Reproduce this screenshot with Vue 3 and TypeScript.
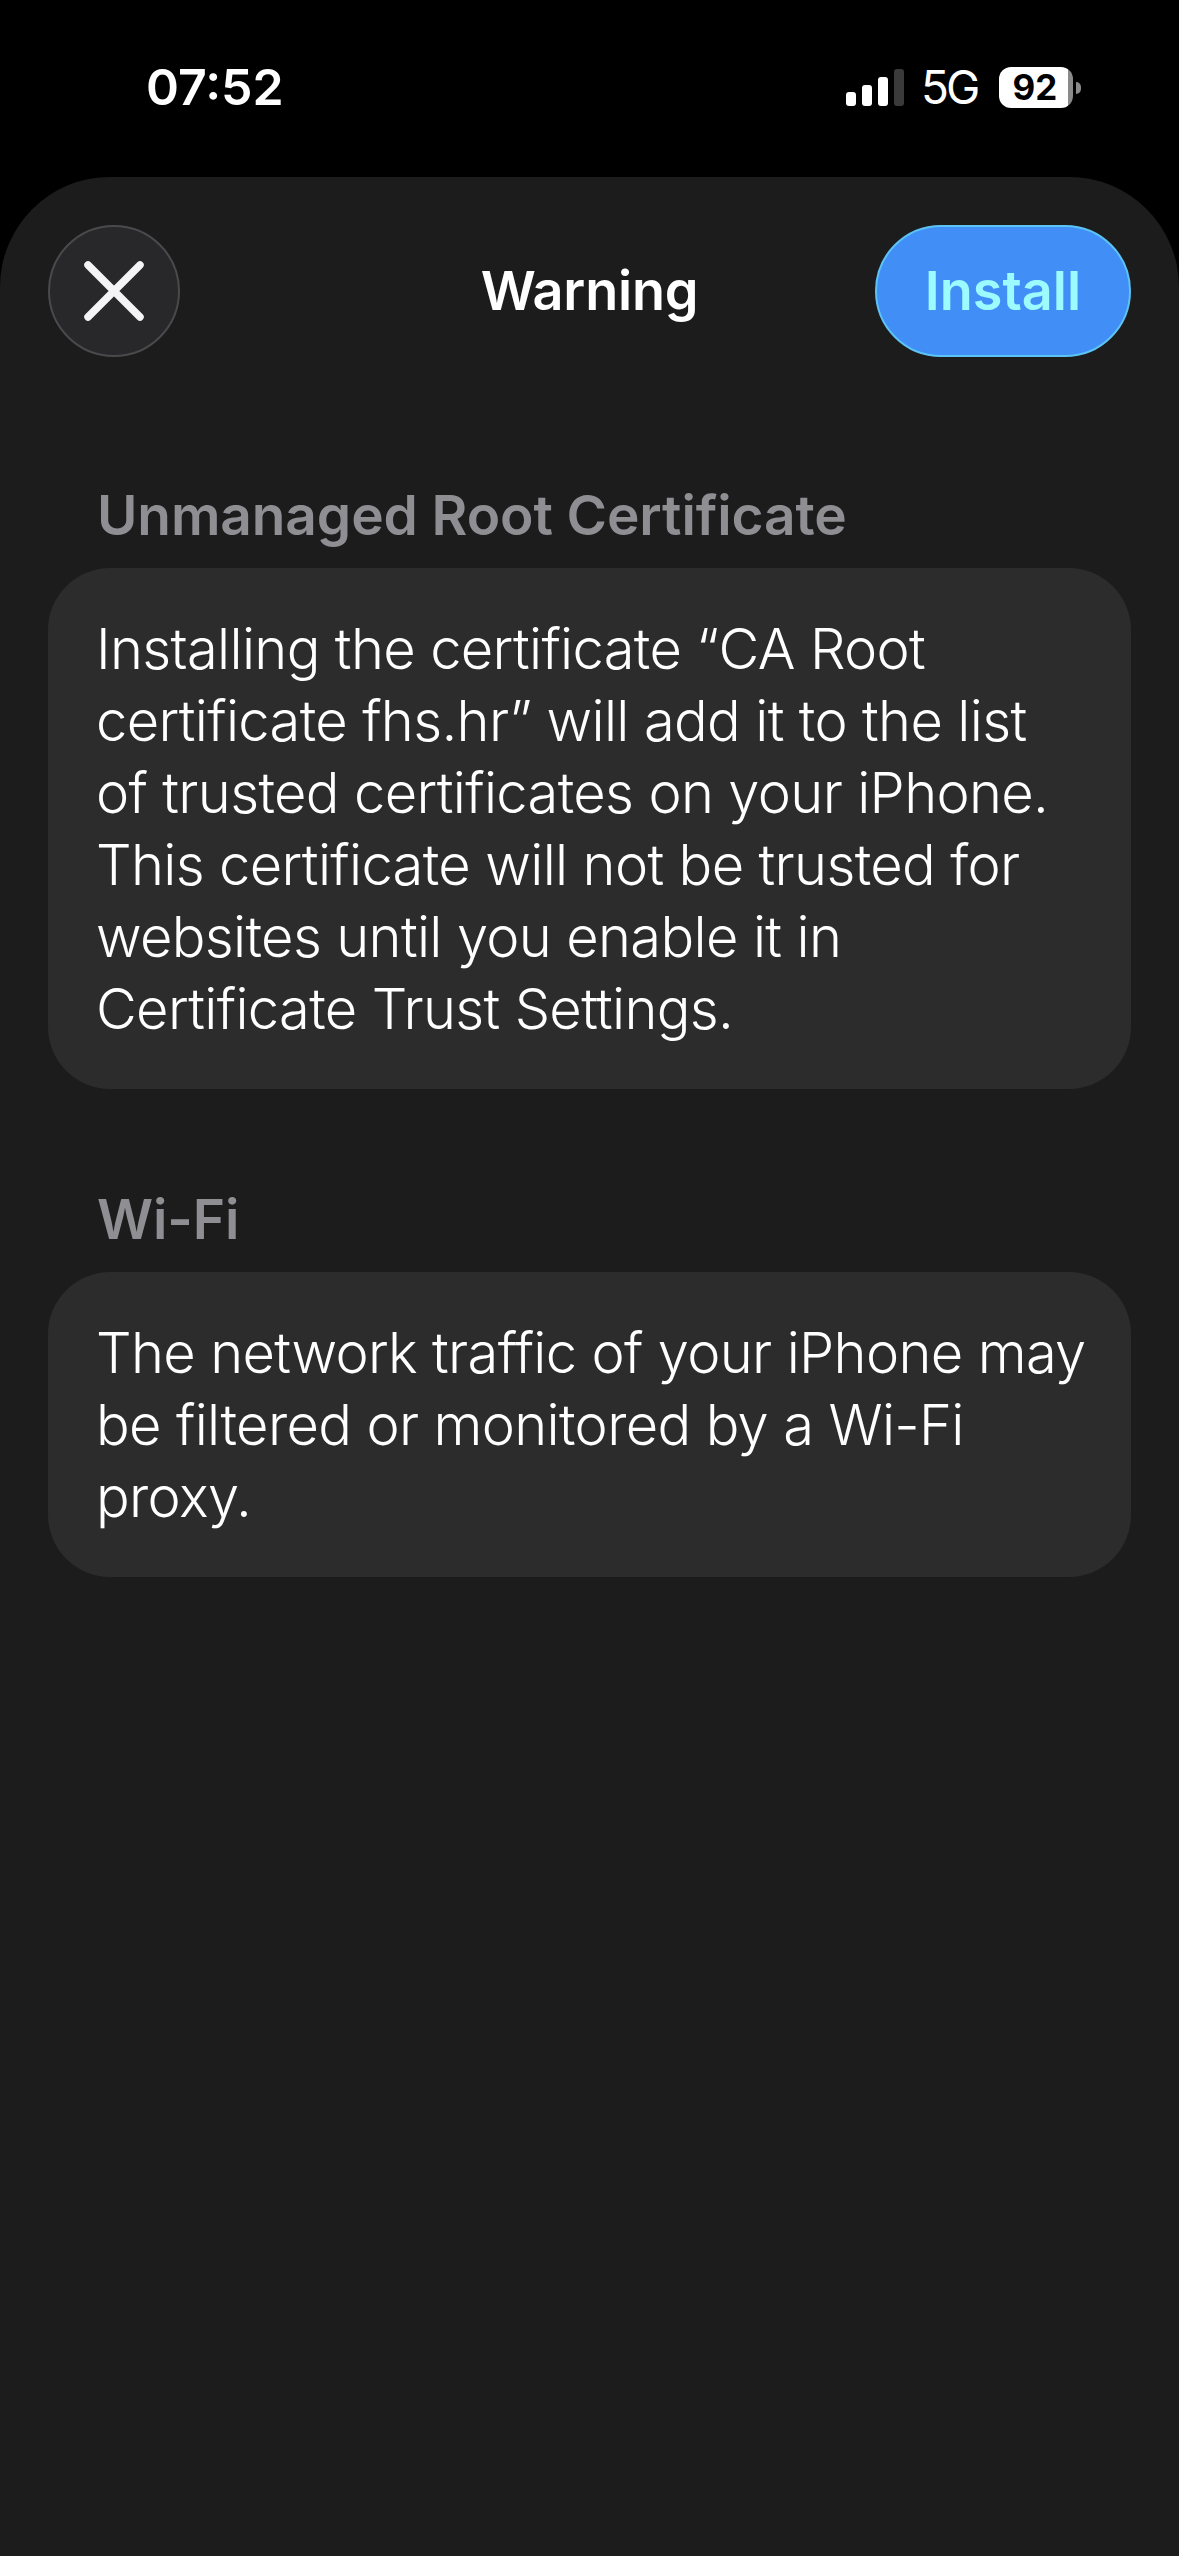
<script setup lang="ts">
interface Section { title: string; body: string[] }
const sections: Section[] = [
  {
    title: 'Unmanaged Root Certificate',
    body: [
      'Installing the certificate “CA Root',
      'certificate fhs.hr” will add it to the list',
      'of trusted certificates on your iPhone.',
      'This certificate will not be trusted for',
      'websites until you enable it in',
      'Certificate Trust Settings.',
    ],
  },
  {
    title: 'Wi-Fi',
    body: [
      'The network traffic of your iPhone may',
      'be filtered or monitored by a Wi-Fi',
      'proxy.',
    ],
  },
]
const bars = [14, 21, 29, 37]
</script>

<template>
  <div class="screen">
    <div class="status">
      <span class="time">07:52</span>
      <div class="right">
        <div class="signal">
          <i v-for="(h, i) in bars" :key="i" :class="{ off: i === 3 }" :style="{ height: h + 'px' }"></i>
        </div>
        <span class="net">5G</span>
        <div class="battery">
          <div class="cell"><b>92</b></div>
          <div class="nub"></div>
        </div>
      </div>
    </div>
    <div class="sheet">
      <div class="nav">
        <button class="close" aria-label="Close">
          <svg width="60" height="60" viewBox="0 0 60 60">
            <path d="M4 4L56 56M56 4L4 56" stroke="#f4f4f6" stroke-width="7.5" stroke-linecap="round" fill="none" />
          </svg>
        </button>
        <span class="title">Warning</span>
        <button class="install">Install</button>
      </div>
      <section v-for="s in sections" :key="s.title" class="group">
        <h2>{{ s.title }}</h2>
        <div class="card">
          <div v-for="l in s.body" :key="l" class="line">{{ l }}</div>
        </div>
      </section>
    </div>
  </div>
</template>

<style>
html, body { margin: 0; background: #000; }
</style>

<style scoped>
.screen {
  width: 1179px;
  height: 2556px;
  background: #000;
  display: flex;
  flex-direction: column;
  font-family: Inter, "Liberation Sans", sans-serif;
  color: #fff;
  overflow: hidden;
}
.status {
  height: 177px;
  flex: none;
  box-sizing: border-box;
  padding: 57px 98px 0 146px;
  display: flex;
  justify-content: space-between;
  align-items: flex-start;
}
.time {
  font-size: 50px;
  line-height: 60px;
  font-weight: 600;
}
.right {
  display: flex;
  align-items: flex-start;
  padding-top: 10px;
}
.signal {
  display: flex;
  align-items: flex-end;
  gap: 6px;
  height: 37px;
  margin-top: 2px;
}
.signal i {
  width: 10px;
  border-radius: 3px;
  background: #fff;
}
.signal i.off { background: #3a3a3a; }
.net {
  width: 57px;
  margin-left: 17px;
  font-size: 46px;
  line-height: 40px;
  font-weight: 400;
  letter-spacing: -3px;
  white-space: nowrap;
}
.battery {
  display: flex;
  align-items: center;
  margin-left: 21px;
}
.cell {
  width: 74px;
  height: 41px;
  border-radius: 12px;
  background: linear-gradient(90deg, #fff 93%, #8a8a8a 93%);
  color: #000;
  display: flex;
  align-items: center;
  justify-content: center;
  padding-right: 2px;
  box-sizing: border-box;
}
.cell b {
  font-size: 35px;
  line-height: 41px;
  font-weight: 700;
}
.nub {
  width: 5px;
  height: 12px;
  margin-left: 3px;
  background: #8a8a8a;
  border-radius: 0 6px 6px 0;
}
.sheet {
  flex: 1;
  background: #1c1c1d;
  border-radius: 110px 110px 0 0;
  padding: 48px 48px 0;
}
.nav {
  display: flex;
  align-items: center;
  justify-content: space-between;
  height: 132px;
  position: relative;
}
.close {
  width: 132px;
  height: 132px;
  border-radius: 50%;
  border: 2px solid #4a4a4d;
  background: #28282a;
  padding: 0;
  display: flex;
  align-items: center;
  justify-content: center;
  box-sizing: border-box;
}
.title {
  position: absolute;
  left: 0;
  right: 0;
  text-align: center;
  font-size: 54px;
  font-weight: 600;
  line-height: 60px;
  letter-spacing: -0.2px;
}
.install {
  width: 256px;
  height: 132px;
  border-radius: 66px;
  border: 2px solid #5cc4f5;
  background: #408ef6;
  color: #9bfbff;
  font: 600 54px/60px Inter, "Liberation Sans", sans-serif;
  letter-spacing: 0;
  padding: 0;
  box-sizing: border-box;
}
.group { margin-top: 128px; }
.group + .group { margin-top: 100px; }
.group h2 {
  margin: 0 0 23px 49px;
  font-size: 55px;
  line-height: 60px;
  font-weight: 600;
  color: #8e8e93;
  letter-spacing: -0.1px;
}
.card {
  background: #2c2c2c;
  border-radius: 62px;
  padding: 45px 48px 44px 48px;
}
.line {
  font-size: 56px;
  line-height: 72px;
  font-weight: 350;
  white-space: nowrap;
  letter-spacing: -0.65px;
}
</style>
